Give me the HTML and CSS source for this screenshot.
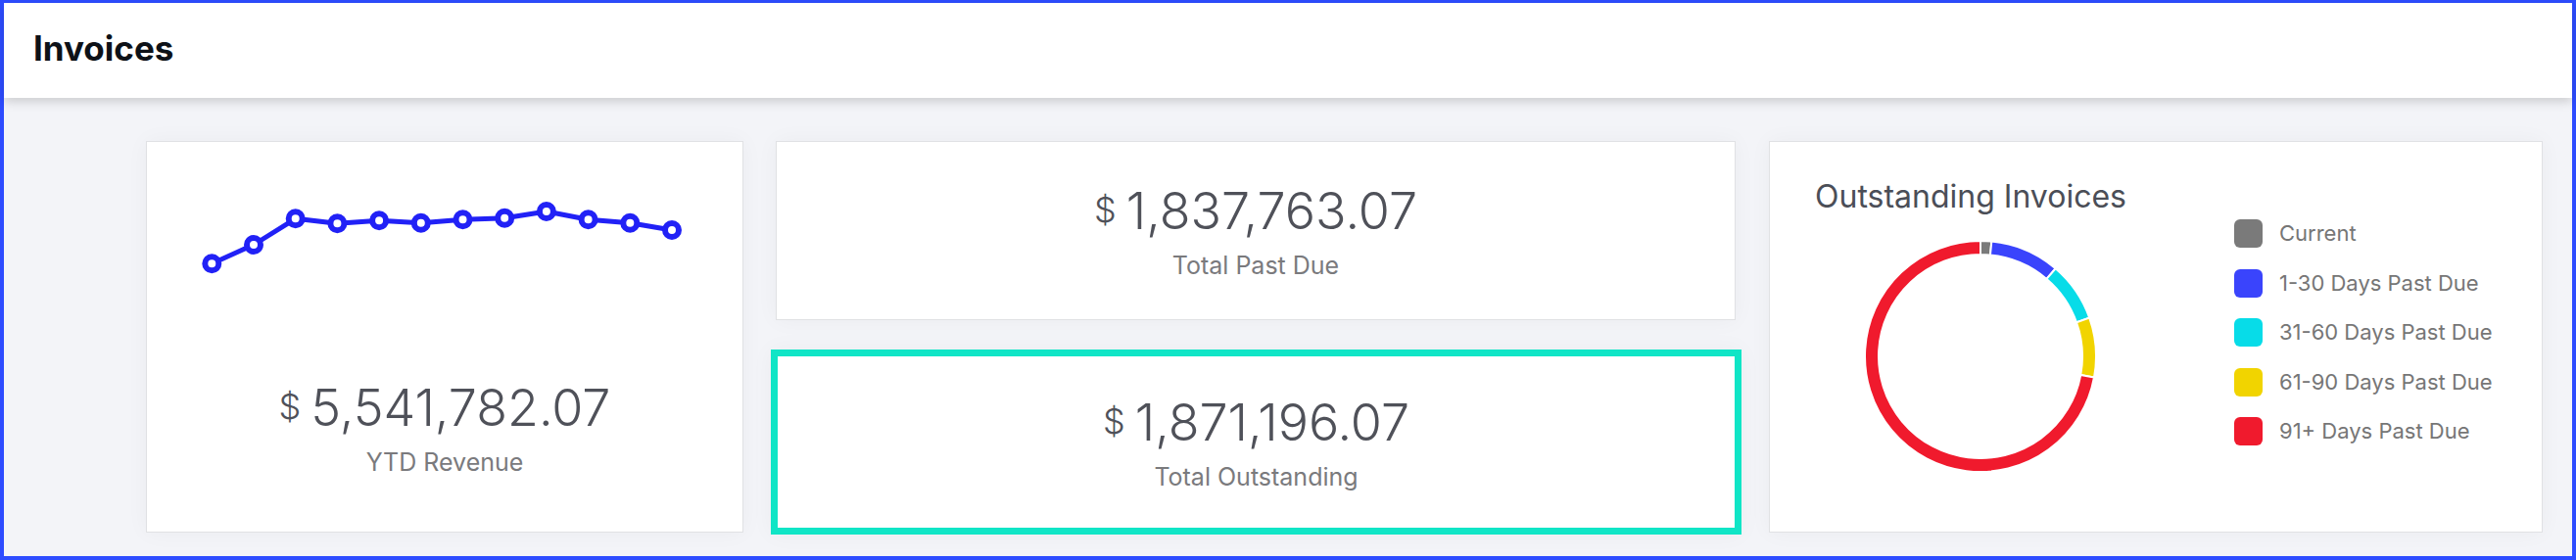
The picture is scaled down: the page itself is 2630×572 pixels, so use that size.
FILE: index.html
```html
<!DOCTYPE html>
<html lang="en">
  <head>
    <meta charset="utf-8">
    <title>Invoices</title>
    <link rel="stylesheet" href="styles.css">
  </head>
  <body>
    <div class="frame">
      <header class="page-header">
        <h1 class="page-title">Invoices</h1>
      </header>

      <main class="dashboard">
        <!-- revenue with sparkline -->
        <section class="card revenue-card">
          <svg class="sparkline" width="608" height="150" viewBox="0 0 608 150">
            <polyline class="spark-line" points="66.3,124.3 109,105 151.7,78.3 194.4,83.3 237.1,80.3 279.8,82.7 322.5,79.3 365.2,77.7 407.9,71 450.6,79.3 493.3,82.7 536,90" />
            <g class="spark-dots">
              <circle cx="66.3" cy="124.3" r="7" />
              <circle cx="109" cy="105" r="7" />
              <circle cx="151.7" cy="78.3" r="7" />
              <circle cx="194.4" cy="83.3" r="7" />
              <circle cx="237.1" cy="80.3" r="7" />
              <circle cx="279.8" cy="82.7" r="7" />
              <circle cx="322.5" cy="79.3" r="7" />
              <circle cx="365.2" cy="77.7" r="7" />
              <circle cx="407.9" cy="71" r="7" />
              <circle cx="450.6" cy="79.3" r="7" />
              <circle cx="493.3" cy="82.7" r="7" />
              <circle cx="536" cy="90" r="7" />
            </g>
          </svg>
          <div class="amount"><span class="currency">$</span>5,541,782.07</div>
          <div class="amount-label">YTD Revenue</div>
        </section>

        <!-- past due / outstanding -->
        <div class="stack">
          <section class="card stat-card">
            <div class="amount"><span class="currency">$</span>1,837,763.07</div>
            <div class="amount-label">Total Past Due</div>
          </section>
          <section class="card stat-card stat-active">
            <div class="amount"><span class="currency">$</span>1,871,196.07</div>
            <div class="amount-label">Total Outstanding</div>
          </section>
        </div>

        <!-- aging donut -->
        <section class="card donut-card">
          <div class="donut-col">
            <h2 class="donut-title">Outstanding Invoices</h2>
            <svg class="donut" width="240" height="240" viewBox="0 0 240 240">
              <path class="seg-current" d="M120,2 A118,118 0 0 1 131.31,2.54 L129.97,16.48 A104,104 0 0 0 120,16 Z" />
              <path class="seg-30" d="M131.31,2.54 A118,118 0 0 1 196.64,30.27 L187.54,40.92 A104,104 0 0 0 129.97,16.48 Z" />
              <path class="seg-60" d="M196.64,30.27 A118,118 0 0 1 231.23,80.61 L218.03,85.28 A104,104 0 0 0 187.54,40.92 Z" />
              <path class="seg-90" d="M231.23,80.61 A118,118 0 0 1 236.02,141.5 L222.26,138.95 A104,104 0 0 0 218.03,85.28 Z" />
              <path class="seg-91" d="M236.02,141.5 A118,118 0 1 1 120,2 L120,16 A104,104 0 1 0 222.26,138.95 Z" />
            </svg>
          </div>
          <ul class="legend">
            <li><span class="swatch seg-current"></span>Current</li>
            <li><span class="swatch seg-30"></span>1-30 Days Past Due</li>
            <li><span class="swatch seg-60"></span>31-60 Days Past Due</li>
            <li><span class="swatch seg-90"></span>61-90 Days Past Due</li>
            <li><span class="swatch seg-91"></span>91+ Days Past Due</li>
          </ul>
        </section>
      </main>
    </div>
  </body>
</html>
```

FILE: styles.css
```css
* {
  margin: 0;
  padding: 0;
  box-sizing: border-box;
}

body {
  font-family: Inter, "Noto Sans", sans-serif;
  background: #fff;
}

/* blue outline round the whole view */
.frame {
  height: 572px;
  display: flex;
  flex-direction: column;
  border: 4px solid #2d4cff;
  border-top-width: 3px;
  background: #f3f4f8;
}

.page-header {
  height: 97px;
  padding: 26px 30px 0 30px;
  background: #fff;
  box-shadow: 0 4px 10px rgba(0, 0, 0, 0.16);
  position: relative;
  z-index: 1;
}

.page-title {
  font-size: 35px;
  line-height: 41px;
  font-weight: 700;
  color: #0d1117;
}

.dashboard {
  flex: 1;
  display: grid;
  grid-template-columns: 610px 991px 790px;
  column-gap: 28px;
  align-items: start;
  padding: 44px 30px 0 145px;
}

.card {
  background: #fff;
  border: 1px solid #e0e1e4;
  box-shadow: 0 0 22px rgba(0, 0, 0, 0.04);
}

/* amounts */
.amount {
  display: flex;
  justify-content: center;
  align-items: flex-start;
  font-size: 52px;
  line-height: 60px;
  font-weight: 300;
  color: #4f5159;
}

.currency {
  font-size: 36px;
  line-height: 1;
  margin-top: 10px;
  margin-right: 10px;
}

.amount-label {
  text-align: center;
  font-size: 25px;
  line-height: 30px;
  color: #7a7a7d;
}

/* left card */
.revenue-card {
  height: 400px;
}

.sparkline {
  display: block;
}

.spark-line {
  fill: none;
  stroke: #2121f6;
  stroke-width: 5;
  stroke-linejoin: round;
}

.spark-dots circle {
  fill: #fff;
  stroke: #2121f6;
  stroke-width: 6;
}

.revenue-card .amount {
  margin-top: 92px;
}

.revenue-card .amount-label {
  margin-top: 10px;
}

/* middle column */
.stack {
  display: flex;
  flex-direction: column;
  gap: 30px;
}

.stat-card {
  height: 183px;
  margin: 0 6px 0 5px;
  display: flex;
  flex-direction: column;
  justify-content: center;
  gap: 10px;
}

.stat-active {
  height: 189px;
  margin: 0;
  border: 7px solid #10e5c6;
}

/* right card */
.donut-card {
  height: 400px;
  display: grid;
  grid-template-columns: 320px auto;
  column-gap: 108px;
  align-items: start;
  padding: 37px 0 0 46px;
}

.donut-title {
  font-size: 32px;
  line-height: 38px;
  font-weight: 400;
  color: #4b4e57;
}

.donut {
  display: block;
  margin: 24px 0 0 49px;
}

.donut path {
  stroke: #fff;
  stroke-width: 2;
}

.legend {
  list-style: none;
  margin-top: 42px;
  display: flex;
  flex-direction: column;
  gap: 21.5px;
}

.legend li {
  display: flex;
  align-items: center;
  gap: 17px;
  font-size: 22px;
  line-height: 29px;
  color: #767676;
}

.swatch {
  width: 29px;
  height: 29px;
  border-radius: 6px;
}

.seg-current { fill: #7a7a7a; background: #7a7a7a; }
.seg-30 { fill: #3a44fc; background: #3a44fc; }
.seg-60 { fill: #07dce8; background: #07dce8; }
.seg-90 { fill: #f1d400; background: #f1d400; }
.seg-91 { fill: #f01a2d; background: #f01a2d; }
```
